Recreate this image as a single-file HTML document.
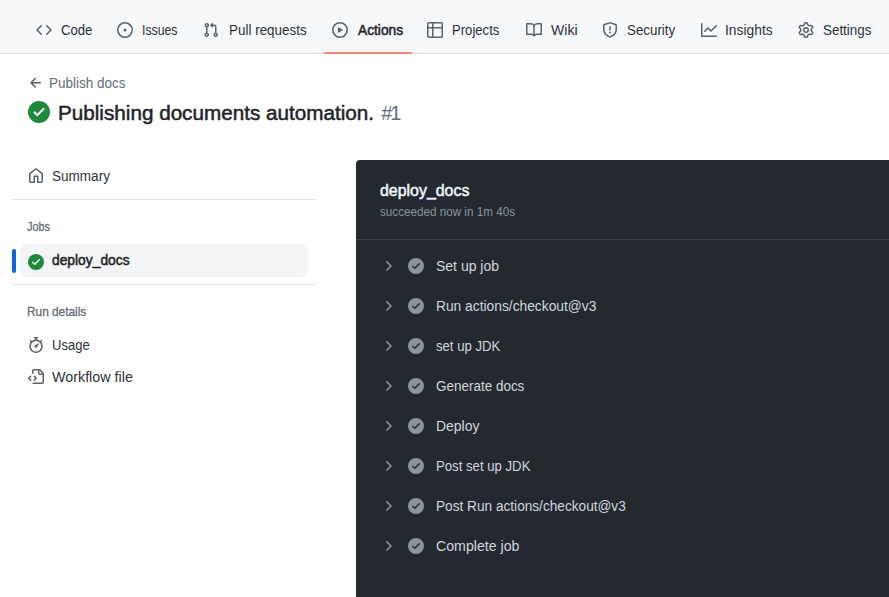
<!DOCTYPE html>
<html><head><meta charset="utf-8">
<style>
*{margin:0;padding:0;box-sizing:border-box}
html,body{width:889px;height:597px;overflow:hidden;background:#fff}
body{position:relative;font-family:"Liberation Sans",sans-serif;color:#1f2328}
.a{position:absolute}
.t{position:absolute;white-space:nowrap;line-height:1}
svg.i{position:absolute;width:16px;height:16px;fill:#5b6169}
#hdr{position:absolute;left:0;top:0;width:889px;height:54px;background:#f6f8fa;border-bottom:1px solid #d8dbdf}
</style></head><body>
<div id="hdr"></div>
<svg class="i" style="left:36px;top:22px" viewBox="0 0 16 16"><path d="m11.28 3.22 4.25 4.25a.75.75 0 0 1 0 1.06l-4.25 4.25a.749.749 0 0 1-1.275-.326.749.749 0 0 1 .215-.734L13.94 8l-3.72-3.72a.749.749 0 0 1 .326-1.275.749.749 0 0 1 .734.215Zm-6.560 0a.751.751 0 0 1 1.042.018.751.751 0 0 1 .018 1.042L2.06 8l3.72 3.72a.749.749 0 0 1-.326 1.275.749.749 0 0 1-.734-.215L.47 8.530a.75.75 0 0 1 0-1.060Z"/></svg>
<svg class="i" style="left:117px;top:22px" viewBox="0 0 16 16"><path d="M8 9.5a1.5 1.5 0 1 0 0-3 1.5 1.5 0 0 0 0 3Z"/><path d="M8 0a8 8 0 1 1 0 16A8 8 0 0 1 8 0ZM1.5 8a6.5 6.5 0 1 0 13 0 6.5 6.5 0 0 0-13 0Z"/></svg>
<svg class="i" style="left:203px;top:22px" viewBox="0 0 16 16"><path d="M1.5 3.25a2.25 2.25 0 1 1 3 2.122v5.256a2.251 2.251 0 1 1-1.5 0V5.372A2.25 2.25 0 0 1 1.5 3.25Zm5.677-.177L9.573.677A.25.25 0 0 1 10 .854V2.5h1A2.5 2.5 0 0 1 13.5 5v5.628a2.251 2.251 0 1 1-1.5 0V5a1 1 0 0 0-1-1h-1v1.646a.25.25 0 0 1-.427.177L7.177 3.427a.25.25 0 0 1 0-.354ZM3.75 2.5a.75.75 0 1 0 0 1.5.75.75 0 0 0 0-1.5Zm0 9.5a.75.75 0 1 0 0 1.5.75.75 0 0 0 0-1.5Zm8.25.75a.75.75 0 1 0 1.5 0 .75.75 0 0 0-1.5 0Z"/></svg>
<svg class="i" style="left:332px;top:22px" viewBox="0 0 16 16"><path d="M8 0a8 8 0 1 1 0 16A8 8 0 0 1 8 0ZM1.5 8a6.5 6.5 0 1 0 13 0 6.5 6.5 0 0 0-13 0Zm4.879-2.773 4.264 2.559a.25.25 0 0 1 0 .428l-4.264 2.559A.25.25 0 0 1 6 10.559V5.442a.25.25 0 0 1 .379-.215Z"/></svg>
<svg class="i" style="left:427px;top:22px" viewBox="0 0 16 16"><path d="M0 1.75C0 .784.784 0 1.75 0h12.5C15.216 0 16 .784 16 1.75v12.5A1.75 1.75 0 0 1 14.250 16H1.75A1.75 1.75 0 0 1 0 14.25ZM6.5 6.5v8h7.75a.25.25 0 0 0 .25-.25V6.5Zm8-1.5V1.75a.25.25 0 0 0-.25-.25H6.5V5Zm-13 1.5v7.75c0 .138.112.25.25.25H5v-8ZM5 5V1.5H1.75a.25.25 0 0 0-.25.25V5Z"/></svg>
<svg class="i" style="left:526px;top:22px" viewBox="0 0 16 16"><path d="M0 1.75A.75.75 0 0 1 .75 1h4.253c1.227 0 2.317.59 3 1.501A3.743 3.743 0 0 1 11.006 1h4.245a.75.75 0 0 1 .75.75v10.5a.75.75 0 0 1-.75.75h-4.507a2.25 2.25 0 0 0-1.591.659l-.622.621a.75.75 0 0 1-1.060 0l-.622-.621A2.25 2.25 0 0 0 5.258 13H.75a.75.75 0 0 1-.75-.75Zm7.251 10.324.004-5.073-.002-2.253A2.25 2.25 0 0 0 5.003 2.5H1.5v9h3.757a3.750 3.750 0 0 1 1.994.574ZM8.755 4.75l-.004 7.322a3.752 3.752 0 0 1 1.992-.572H14.5v-9h-3.495a2.25 2.25 0 0 0-2.25 2.25Z"/></svg>
<svg class="i" style="left:602px;top:22px" viewBox="0 0 16 16"><path d="M7.467.133a1.748 1.748 0 0 1 1.066 0l5.250 1.68A1.750 1.750 0 0 1 15 3.48V7c0 1.566-.32 3.182-1.303 4.682-.983 1.498-2.585 2.813-5.032 3.855a1.697 1.697 0 0 1-1.330 0c-2.447-1.042-4.049-2.357-5.032-3.855C1.320 10.182 1 8.566 1 7V3.48a1.755 1.755 0 0 1 1.217-1.667Zm.61 1.429a.25.25 0 0 0-.153 0l-5.250 1.680a.25.25 0 0 0-.174.238V7c0 1.358.275 2.666 1.057 3.860.784 1.194 2.121 2.340 4.366 3.297a.196.196 0 0 0 .154 0c2.245-.956 3.582-2.104 4.366-3.298C13.225 9.666 13.5 8.360 13.5 7V3.48a.251.251 0 0 0-.174-.237l-5.250-1.680ZM8.750 4.750v3a.75.75 0 0 1-1.5 0v-3a.75.75 0 0 1 1.5 0ZM9 10.5a1 1 0 1 1-2 0 1 1 0 0 1 2 0Z"/></svg>
<svg class="i" style="left:701px;top:22px" viewBox="0 0 16 16"><path d="M1.5 1.75V13.5h13.75a.75.75 0 0 1 0 1.5H.75a.75.75 0 0 1-.75-.75V1.75a.75.75 0 0 1 1.5 0Zm14.28 2.53-5.25 5.25a.75.75 0 0 1-1.06 0L7 7.06 4.28 9.78a.751.751 0 0 1-1.042-.018.751.751 0 0 1-.018-1.042l3.25-3.25a.75.75 0 0 1 1.06 0L10 7.94l4.72-4.72a.751.751 0 0 1 1.042.018.751.751 0 0 1 .018 1.042Z"/></svg>
<svg class="i" style="left:798px;top:22px" viewBox="0 0 16 16"><path d="M8 0a8.2 8.2 0 0 1 .701.031C9.444.095 9.99.645 10.16 1.29l.288 1.107c.018.066.079.158.212.224.231.114.454.243.668.386.123.082.233.09.299.071l1.103-.303c.644-.176 1.392.021 1.82.63.27.385.506.792.704 1.218.315.675.111 1.422-.364 1.891l-.814.806c-.049.048-.098.147-.088.294.016.257.016.515 0 .772-.01.147.038.246.088.294l.814.806c.475.469.679 1.216.364 1.891a7.977 7.977 0 0 1-.704 1.217c-.428.61-1.176.807-1.82.63l-1.102-.302c-.067-.019-.177-.011-.3.071a5.909 5.909 0 0 1-.668.386c-.133.066-.194.158-.211.224l-.29 1.106c-.168.646-.715 1.196-1.458 1.26a8.006 8.006 0 0 1-1.402 0c-.743-.064-1.289-.614-1.458-1.26l-.289-1.106c-.018-.066-.079-.158-.212-.224a5.738 5.738 0 0 1-.668-.386c-.123-.082-.233-.09-.299-.071l-1.103.303c-.644.176-1.392-.021-1.82-.63a8.12 8.12 0 0 1-.704-1.218c-.315-.675-.111-1.422.363-1.891l.815-.806c.05-.048.098-.147.088-.294a6.214 6.214 0 0 1 0-.772c.01-.147-.038-.246-.088-.294l-.815-.806C.635 6.045.431 5.298.746 4.623a7.92 7.92 0 0 1 .704-1.217c.428-.61 1.176-.807 1.82-.63l1.102.302c.067.019.177.011.3-.071.214-.143.437-.272.668-.386.133-.066.194-.158.211-.224l.29-1.106C6.009.645 6.556.095 7.299.03 7.53.01 7.764 0 8 0Zm-.571 1.525c-.036.003-.108.036-.137.146l-.289 1.105c-.147.561-.549.967-.998 1.189-.173.086-.34.183-.5.29-.417.278-.97.423-1.529.27l-1.103-.303c-.109-.03-.175.016-.195.045-.22.312-.412.644-.573.99-.014.031-.021.11.059.19l.815.806c.411.406.562.957.53 1.456a4.709 4.709 0 0 0 0 .582c.032.499-.119 1.05-.53 1.456l-.815.806c-.081.08-.073.159-.059.19.162.346.353.677.573.989.02.03.085.076.195.046l1.102-.303c.56-.153 1.113-.008 1.53.27.161.107.328.204.501.29.447.222.85.629.997 1.189l.289 1.105c.029.109.101.143.137.146a6.6 6.6 0 0 0 1.142 0c.036-.003.108-.036.137-.146l.289-1.105c.147-.561.549-.967.998-1.189.173-.086.34-.183.5-.29.417-.278.97-.423 1.529-.27l1.103.303c.109.029.175-.016.195-.045.22-.313.411-.644.573-.99.014-.031.021-.11-.059-.19l-.815-.806c-.411-.406-.562-.957-.53-1.456a4.709 4.709 0 0 0 0-.582c-.032-.499.119-1.05.53-1.456l.815-.806c.081-.08.073-.159.059-.19a6.464 6.464 0 0 0-.573-.989c-.02-.03-.085-.076-.195-.046l-1.102.303c-.56.153-1.113.008-1.53-.27a4.44 4.44 0 0 0-.501-.29c-.447-.222-.85-.629-.997-1.189l-.289-1.105c-.029-.11-.101-.143-.137-.146a6.6 6.6 0 0 0-1.142 0ZM11 8a3 3 0 1 1-6 0 3 3 0 0 1 6 0ZM9.5 8a1.5 1.5 0 1 0-3.001.001A1.5 1.5 0 0 0 9.5 8Z"/></svg>
<div class="a" style="left:324px;top:52px;width:88px;height:2px;background:#f0866f"></div>
<svg class="i" style="left:28px;top:75px;width:16px;height:16px;fill:#5b6169" viewBox="0 0 16 16"><path d="M7.78 12.53a.75.75 0 0 1-1.06 0L2.47 8.28a.75.75 0 0 1 0-1.06l4.25-4.25a.751.751 0 0 1 1.042.018.751.751 0 0 1 .018 1.042L4.81 7h7.44a.75.75 0 0 1 0 1.5H4.81l2.97 2.970a.75.75 0 0 1 0 1.06Z"/></svg>
<svg class="i" style="left:28px;top:101px;width:22px;height:22px;fill:#1f883d" viewBox="0 0 16 16"><path d="M8 16A8 8 0 1 1 8 0a8 8 0 0 1 0 16Zm3.78-9.72a.751.751 0 0 0-.018-1.042.751.751 0 0 0-1.042-.018L6.75 9.19 5.28 7.72a.751.751 0 0 0-1.042.018.751.751 0 0 0-.018 1.042l2 2a.75.75 0 0 0 1.06 0Z"/></svg>
<svg class="i" style="left:28px;top:168px;width:16px;height:16px;fill:#5b6169" viewBox="0 0 16 16"><path d="M6.906.664a1.749 1.749 0 0 1 2.187 0l5.25 4.2c.415.332.657.835.657 1.367v7.019A1.75 1.75 0 0 1 13.25 15h-3.5a.75.75 0 0 1-.75-.75V9H7v5.25a.75.75 0 0 1-.75.75h-3.5A1.75 1.75 0 0 1 1 13.25V6.23c0-.531.242-1.034.657-1.366l5.25-4.2Zm1.25 1.171a.25.25 0 0 0-.312 0l-5.25 4.2a.25.25 0 0 0-.094.196v7.019c0 .138.112.25.25.25H5.5V8.25a.75.75 0 0 1 .75-.75h3.5a.75.75 0 0 1 .75.75v5.25h2.75a.25.25 0 0 0 .25-.25V6.23a.25.25 0 0 0-.094-.195Z"/></svg>
<div class="a" style="left:12px;top:199px;width:304px;height:1px;background:#e1e4e8"></div>
<div class="a" style="left:20px;top:244px;width:288px;height:33px;border-radius:6px;background:#f3f4f6"></div>
<div class="a" style="left:12px;top:249px;width:4px;height:24px;border-radius:2px;background:#0969da"></div>
<svg class="i" style="left:28px;top:254px;width:16px;height:16px;fill:#1f883d" viewBox="0 0 16 16"><path d="M8 16A8 8 0 1 1 8 0a8 8 0 0 1 0 16Zm3.78-9.72a.751.751 0 0 0-.018-1.042.751.751 0 0 0-1.042-.018L6.75 9.19 5.28 7.72a.751.751 0 0 0-1.042.018.751.751 0 0 0-.018 1.042l2 2a.75.75 0 0 0 1.06 0Z"/></svg>
<div class="a" style="left:12px;top:284px;width:304px;height:1px;background:#e1e4e8"></div>
<svg class="i" style="left:28px;top:337px;width:16px;height:16px;fill:#5b6169" viewBox="0 0 16 16"><path d="M5.75.75A.75.75 0 0 1 6.5 0h3a.75.75 0 0 1 0 1.5h-.75v1l-.001.041a6.724 6.724 0 0 1 3.464 1.435l.007-.006.75-.75a.749.749 0 0 1 1.275.326.749.749 0 0 1-.215.734l-.75.75-.006.007a6.75 6.75 0 1 1-10.548 0L2.72 5.03l-.75-.75a.751.751 0 0 1 .018-1.042.751.751 0 0 1 1.042-.018l.75.75.007.006A6.72 6.72 0 0 1 7.25 2.541a.424.424 0 0 1 0-.041v-1H6.5a.75.75 0 0 1-.75-.75ZM8 14.5A5.25 5.25 0 1 0 8 4a5.25 5.25 0 0 0 0 10.5Zm.389-6.7 1.33-1.33a.75.75 0 1 1 1.061 1.06L9.450 8.861A1.503 1.503 0 0 1 8 10.75a1.499 1.499 0 1 1 .389-2.950Z"/></svg>
<svg class="i" style="left:28px;top:369px;width:16px;height:16px;fill:#5b6169" viewBox="0 0 16 16"><path d="M4 1.75C4 .784 4.784 0 5.75 0h5.586c.464 0 .909.184 1.237.513l2.914 2.914c.329.328.513.773.513 1.237v8.586A1.75 1.75 0 0 1 14.25 15h-9a.75.75 0 0 1 0-1.5h9a.25.25 0 0 0 .25-.25V6h-2.75A1.75 1.75 0 0 1 10 4.25V1.5H5.75a.25.25 0 0 0-.25.25v2.5a.75.75 0 0 1-1.5 0Zm1.72 4.97a.75.75 0 0 1 1.06 0l2 2a.75.75 0 0 1 0 1.06l-2 2a.749.749 0 0 1-1.275-.326.749.749 0 0 1 .215-.734l1.47-1.47-1.47-1.47a.75.75 0 0 1 0-1.06ZM3.28 7.78 1.81 9.25l1.47 1.47a.751.751 0 0 1-.018 1.042.751.751 0 0 1-1.042.018l-2-2a.75.75 0 0 1 0-1.06l2-2a.751.751 0 0 1 1.042.018.751.751 0 0 1 .018 1.042Zm8.22-6.218V4.25c0 .138.112.25.25.25h2.688l-.011-.013-2.914-2.914-.013-.011Z"/></svg>
<div class="a" style="left:356px;top:160px;width:600px;height:500px;border-top-left-radius:4px;background:#24292f"></div>
<div class="a" style="left:356px;top:239px;width:533px;height:1px;background:#373e47"></div>
<svg class="i" style="left:380px;top:258px;width:16px;height:16px;fill:#8c959f" viewBox="0 0 16 16"><path d="M6.22 3.22a.75.75 0 0 1 1.06 0l4.25 4.25a.75.75 0 0 1 0 1.06l-4.25 4.25a.751.751 0 0 1-1.042-.018.751.751 0 0 1-.018-1.042L9.94 8 6.22 4.28a.75.75 0 0 1 0-1.06Z"/></svg>
<svg class="i" style="left:408px;top:258px;width:16px;height:16px;fill:#8c959f" viewBox="0 0 16 16"><path d="M8 16A8 8 0 1 1 8 0a8 8 0 0 1 0 16Zm3.78-9.72a.751.751 0 0 0-.018-1.042.751.751 0 0 0-1.042-.018L6.75 9.19 5.28 7.72a.751.751 0 0 0-1.042.018.751.751 0 0 0-.018 1.042l2 2a.75.75 0 0 0 1.06 0Z"/></svg>
<svg class="i" style="left:380px;top:298px;width:16px;height:16px;fill:#8c959f" viewBox="0 0 16 16"><path d="M6.22 3.22a.75.75 0 0 1 1.06 0l4.25 4.25a.75.75 0 0 1 0 1.06l-4.25 4.25a.751.751 0 0 1-1.042-.018.751.751 0 0 1-.018-1.042L9.94 8 6.22 4.28a.75.75 0 0 1 0-1.06Z"/></svg>
<svg class="i" style="left:408px;top:298px;width:16px;height:16px;fill:#8c959f" viewBox="0 0 16 16"><path d="M8 16A8 8 0 1 1 8 0a8 8 0 0 1 0 16Zm3.78-9.72a.751.751 0 0 0-.018-1.042.751.751 0 0 0-1.042-.018L6.75 9.19 5.28 7.72a.751.751 0 0 0-1.042.018.751.751 0 0 0-.018 1.042l2 2a.75.75 0 0 0 1.06 0Z"/></svg>
<svg class="i" style="left:380px;top:338px;width:16px;height:16px;fill:#8c959f" viewBox="0 0 16 16"><path d="M6.22 3.22a.75.75 0 0 1 1.06 0l4.25 4.25a.75.75 0 0 1 0 1.06l-4.25 4.25a.751.751 0 0 1-1.042-.018.751.751 0 0 1-.018-1.042L9.94 8 6.22 4.28a.75.75 0 0 1 0-1.06Z"/></svg>
<svg class="i" style="left:408px;top:338px;width:16px;height:16px;fill:#8c959f" viewBox="0 0 16 16"><path d="M8 16A8 8 0 1 1 8 0a8 8 0 0 1 0 16Zm3.78-9.72a.751.751 0 0 0-.018-1.042.751.751 0 0 0-1.042-.018L6.75 9.19 5.28 7.72a.751.751 0 0 0-1.042.018.751.751 0 0 0-.018 1.042l2 2a.75.75 0 0 0 1.06 0Z"/></svg>
<svg class="i" style="left:380px;top:378px;width:16px;height:16px;fill:#8c959f" viewBox="0 0 16 16"><path d="M6.22 3.22a.75.75 0 0 1 1.06 0l4.25 4.25a.75.75 0 0 1 0 1.06l-4.25 4.25a.751.751 0 0 1-1.042-.018.751.751 0 0 1-.018-1.042L9.94 8 6.22 4.28a.75.75 0 0 1 0-1.06Z"/></svg>
<svg class="i" style="left:408px;top:378px;width:16px;height:16px;fill:#8c959f" viewBox="0 0 16 16"><path d="M8 16A8 8 0 1 1 8 0a8 8 0 0 1 0 16Zm3.78-9.72a.751.751 0 0 0-.018-1.042.751.751 0 0 0-1.042-.018L6.75 9.19 5.28 7.72a.751.751 0 0 0-1.042.018.751.751 0 0 0-.018 1.042l2 2a.75.75 0 0 0 1.06 0Z"/></svg>
<svg class="i" style="left:380px;top:418px;width:16px;height:16px;fill:#8c959f" viewBox="0 0 16 16"><path d="M6.22 3.22a.75.75 0 0 1 1.06 0l4.25 4.25a.75.75 0 0 1 0 1.06l-4.25 4.25a.751.751 0 0 1-1.042-.018.751.751 0 0 1-.018-1.042L9.94 8 6.22 4.28a.75.75 0 0 1 0-1.06Z"/></svg>
<svg class="i" style="left:408px;top:418px;width:16px;height:16px;fill:#8c959f" viewBox="0 0 16 16"><path d="M8 16A8 8 0 1 1 8 0a8 8 0 0 1 0 16Zm3.78-9.72a.751.751 0 0 0-.018-1.042.751.751 0 0 0-1.042-.018L6.75 9.19 5.28 7.72a.751.751 0 0 0-1.042.018.751.751 0 0 0-.018 1.042l2 2a.75.75 0 0 0 1.06 0Z"/></svg>
<svg class="i" style="left:380px;top:458px;width:16px;height:16px;fill:#8c959f" viewBox="0 0 16 16"><path d="M6.22 3.22a.75.75 0 0 1 1.06 0l4.25 4.25a.75.75 0 0 1 0 1.06l-4.25 4.25a.751.751 0 0 1-1.042-.018.751.751 0 0 1-.018-1.042L9.94 8 6.22 4.28a.75.75 0 0 1 0-1.06Z"/></svg>
<svg class="i" style="left:408px;top:458px;width:16px;height:16px;fill:#8c959f" viewBox="0 0 16 16"><path d="M8 16A8 8 0 1 1 8 0a8 8 0 0 1 0 16Zm3.78-9.72a.751.751 0 0 0-.018-1.042.751.751 0 0 0-1.042-.018L6.75 9.19 5.28 7.72a.751.751 0 0 0-1.042.018.751.751 0 0 0-.018 1.042l2 2a.75.75 0 0 0 1.06 0Z"/></svg>
<svg class="i" style="left:380px;top:498px;width:16px;height:16px;fill:#8c959f" viewBox="0 0 16 16"><path d="M6.22 3.22a.75.75 0 0 1 1.06 0l4.25 4.25a.75.75 0 0 1 0 1.06l-4.25 4.25a.751.751 0 0 1-1.042-.018.751.751 0 0 1-.018-1.042L9.94 8 6.22 4.28a.75.75 0 0 1 0-1.06Z"/></svg>
<svg class="i" style="left:408px;top:498px;width:16px;height:16px;fill:#8c959f" viewBox="0 0 16 16"><path d="M8 16A8 8 0 1 1 8 0a8 8 0 0 1 0 16Zm3.78-9.72a.751.751 0 0 0-.018-1.042.751.751 0 0 0-1.042-.018L6.75 9.19 5.28 7.72a.751.751 0 0 0-1.042.018.751.751 0 0 0-.018 1.042l2 2a.75.75 0 0 0 1.06 0Z"/></svg>
<svg class="i" style="left:380px;top:538px;width:16px;height:16px;fill:#8c959f" viewBox="0 0 16 16"><path d="M6.22 3.22a.75.75 0 0 1 1.06 0l4.25 4.25a.75.75 0 0 1 0 1.06l-4.25 4.25a.751.751 0 0 1-1.042-.018.751.751 0 0 1-.018-1.042L9.94 8 6.22 4.28a.75.75 0 0 1 0-1.06Z"/></svg>
<svg class="i" style="left:408px;top:538px;width:16px;height:16px;fill:#8c959f" viewBox="0 0 16 16"><path d="M8 16A8 8 0 1 1 8 0a8 8 0 0 1 0 16Zm3.78-9.72a.751.751 0 0 0-.018-1.042.751.751 0 0 0-1.042-.018L6.75 9.19 5.28 7.72a.751.751 0 0 0-1.042.018.751.751 0 0 0-.018 1.042l2 2a.75.75 0 0 0 1.06 0Z"/></svg>
<div class="t" id="n0" style="left:60.7px;top:23.15px;font-size:14px;color:#2c3137;font-weight:normal;transform:scaleX(0.9367);transform-origin:0 0;">Code</div>
<div class="t" id="n1" style="left:142.3px;top:23.15px;font-size:14px;color:#2c3137;font-weight:normal;transform:scaleX(0.8777);transform-origin:0 0;">Issues</div>
<div class="t" id="n2" style="left:228.7px;top:23.15px;font-size:14px;color:#2c3137;font-weight:normal;transform:scaleX(0.9605);transform-origin:0 0;">Pull requests</div>
<div class="t" id="n3" style="left:357.6px;top:23.15px;font-size:14px;color:#1f2328;font-weight:normal;transform:scaleX(0.981);transform-origin:0 0;-webkit-text-stroke:0.5px currentColor;">Actions</div>
<div class="t" id="n4" style="left:452.4px;top:23.15px;font-size:14px;color:#2c3137;font-weight:normal;transform:scaleX(0.9362);transform-origin:0 0;">Projects</div>
<div class="t" id="n5" style="left:550.6px;top:23.15px;font-size:14px;color:#2c3137;font-weight:normal;transform:scaleX(1.0081);transform-origin:0 0;">Wiki</div>
<div class="t" id="n6" style="left:627.4px;top:23.15px;font-size:14px;color:#2c3137;font-weight:normal;transform:scaleX(0.953);transform-origin:0 0;">Security</div>
<div class="t" id="n7" style="left:725px;top:23.15px;font-size:14px;color:#2c3137;font-weight:normal;transform:scaleX(0.9873);transform-origin:0 0;">Insights</div>
<div class="t" id="n8" style="left:823.4px;top:23.15px;font-size:14px;color:#2c3137;font-weight:normal;transform:scaleX(0.957);transform-origin:0 0;">Settings</div>
<div class="t" id="back" style="left:48.6px;top:76.15px;font-size:14px;color:#656d76;font-weight:normal;transform:scaleX(0.9646);transform-origin:0 0;">Publish docs</div>
<div class="t" id="title" style="left:58.4px;top:102.57px;font-size:20px;color:#1f2328;font-weight:normal;transform:scaleX(1.0336);transform-origin:0 0;-webkit-text-stroke:0.5px currentColor;">Publishing documents automation.</div>
<div class="t" id="num" style="left:381.2px;top:102.57px;font-size:20px;color:#656d76;font-weight:normal;letter-spacing:-2.0px;">#1</div>
<div class="t" id="summary" style="left:52.2px;top:169.15px;font-size:14px;color:#2c3137;font-weight:normal;transform:scaleX(0.967);transform-origin:0 0;">Summary</div>
<div class="t" id="jobs" style="left:26.6px;top:220.84px;font-size:12px;color:#656d76;font-weight:normal;transform:scaleX(0.9045);transform-origin:0 0;-webkit-text-stroke:0.3px currentColor;">Jobs</div>
<div class="t" id="job" style="left:52.2px;top:253.15px;font-size:14px;color:#1f2328;font-weight:normal;transform:scaleX(0.9865);transform-origin:0 0;-webkit-text-stroke:0.5px currentColor;">deploy_docs</div>
<div class="t" id="rund" style="left:26.6px;top:305.84px;font-size:12px;color:#656d76;font-weight:normal;transform:scaleX(0.9867);transform-origin:0 0;-webkit-text-stroke:0.3px currentColor;">Run details</div>
<div class="t" id="usage" style="left:52.2px;top:338.15px;font-size:14px;color:#2c3137;font-weight:normal;transform:scaleX(0.9302);transform-origin:0 0;">Usage</div>
<div class="t" id="wf" style="left:52.2px;top:370.15px;font-size:14px;color:#2c3137;font-weight:normal;transform:scaleX(1.0227);transform-origin:0 0;">Workflow file</div>
<div class="t" id="ptitle" style="left:380.4px;top:183.46px;font-size:16px;color:#f0f6fc;font-weight:normal;transform:scaleX(0.9945);transform-origin:0 0;-webkit-text-stroke:0.5px currentColor;">deploy_docs</div>
<div class="t" id="psub" style="left:380.4px;top:205.84px;font-size:12px;color:#8c959f;font-weight:normal;transform:scaleX(0.9727);transform-origin:0 0;">succeeded now in 1m 40s</div>
<div class="t" id="s0" style="left:436px;top:259.15px;font-size:14px;color:#d0d7de;font-weight:normal;">Set up job</div>
<div class="t" id="s1" style="left:436px;top:299.15px;font-size:14px;color:#d0d7de;font-weight:normal;transform:scaleX(0.9847);transform-origin:0 0;">Run actions/checkout@v3</div>
<div class="t" id="s2" style="left:436px;top:339.15px;font-size:14px;color:#d0d7de;font-weight:normal;transform:scaleX(0.9377);transform-origin:0 0;">set up JDK</div>
<div class="t" id="s3" style="left:436px;top:379.15px;font-size:14px;color:#d0d7de;font-weight:normal;transform:scaleX(0.962);transform-origin:0 0;">Generate docs</div>
<div class="t" id="s4" style="left:436px;top:419.15px;font-size:14px;color:#d0d7de;font-weight:normal;transform:scaleX(0.9956);transform-origin:0 0;">Deploy</div>
<div class="t" id="s5" style="left:436px;top:459.15px;font-size:14px;color:#d0d7de;font-weight:normal;transform:scaleX(0.9406);transform-origin:0 0;">Post set up JDK</div>
<div class="t" id="s6" style="left:436px;top:499.15px;font-size:14px;color:#d0d7de;font-weight:normal;transform:scaleX(0.9744);transform-origin:0 0;">Post Run actions/checkout@v3</div>
<div class="t" id="s7" style="left:436px;top:539.15px;font-size:14px;color:#d0d7de;font-weight:normal;transform:scaleX(1.0109);transform-origin:0 0;">Complete job</div>
</body></html>
